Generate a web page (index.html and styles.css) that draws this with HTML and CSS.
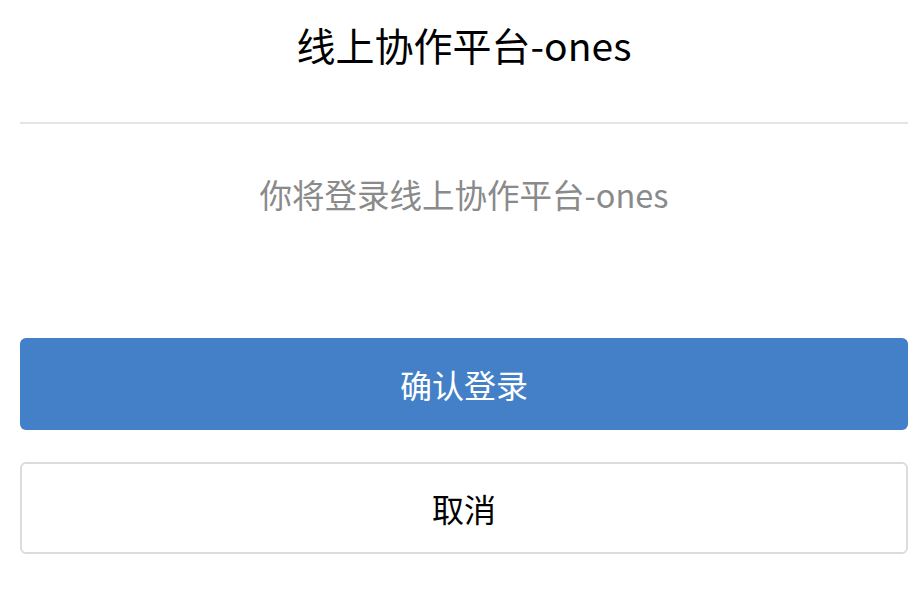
FILE: index.html
```html
<!DOCTYPE html>
<html lang="zh-CN">
<head>
<meta charset="utf-8">
<title>线上协作平台-ones</title>
<link rel="stylesheet" href="styles.css">
</head>
<body>
<div class="page">
  <header class="header">
    <h1 class="title">线上协作平台-ones</h1>
  </header>
  <p class="desc">你将登录线上协作平台-ones</p>
  <div class="actions">
    <button class="btn btn-primary">确认登录</button>
    <button class="btn btn-default">取消</button>
  </div>
</div>
</body>
</html>
```

FILE: styles.css
```css
* { box-sizing: border-box; }
html, body { margin: 0; padding: 0; background: #fff; }
body {
  font-family: "Noto Sans CJK SC", "Noto Sans", sans-serif;
  color: #000;
}
.page {
  padding: 0 16px 0 20px;
}
.header {
  height: 124px;
  border-bottom: 2px solid #e5e5e5;
  display: flex;
  align-items: center;
  justify-content: center;
  padding-bottom: 34px;
}
.title {
  margin: 0;
  font-size: 39px;
  font-weight: 400;
  line-height: 1;
}
.desc {
  margin: 50px 0 0;
  text-align: center;
  font-size: 32.5px;
  line-height: 40px;
  color: #8a8a8a;
}
.actions {
  margin-top: 124px;
  display: flex;
  flex-direction: column;
  gap: 32px;
}
.btn {
  display: block;
  width: 100%;
  height: 92px;
  border-radius: 6px;
  font-family: inherit;
  font-size: 32px;
  padding: 0;
}
.btn-primary {
  background: #4380c8;
  color: #fff;
  border: none;
}
.btn-default {
  background: #fff;
  color: #000;
  border: 2px solid #dcdcdc;
}
```
